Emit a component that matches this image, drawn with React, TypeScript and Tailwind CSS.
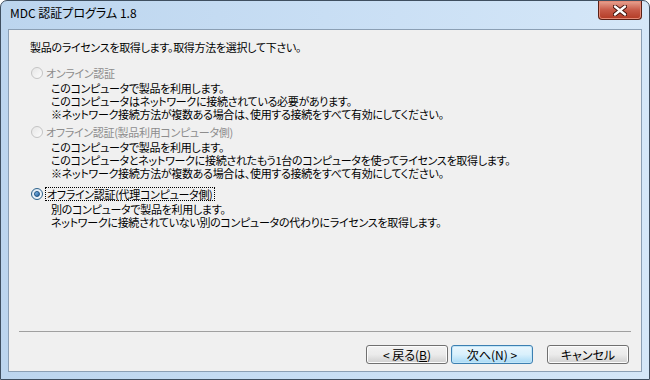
import { Fragment, ReactNode } from "react";

function Radio({ checked, disabled }: { checked?: boolean; disabled?: boolean }) {
  if (checked) {
    return (
      <span className="flex h-[12px] w-[12px] shrink-0 items-center justify-center rounded-full border border-[#2c628b] bg-gradient-to-br from-[#dce8f4] to-[#f6f9fc]">
        <span className="h-[6px] w-[6px] rounded-full border border-[#1c5180] bg-gradient-to-br from-[#8ec3ef] to-[#1f5f9e]" />
      </span>
    );
  }
  return (
    <span
      className={
        disabled
          ? "h-[12px] w-[12px] shrink-0 rounded-full border border-[#c4c4c4] bg-gradient-to-br from-[#e6e6e6] to-[#fbfbfb]"
          : "h-[12px] w-[12px] shrink-0 rounded-full border border-[#8e8f8f] bg-gradient-to-br from-[#dcdcdc] to-[#fafafa]"
      }
    />
  );
}

function Option({
  label,
  lines,
  checked,
  disabled,
  className,
}: {
  label: string;
  lines: string[];
  checked?: boolean;
  disabled?: boolean;
  className?: string;
}) {
  return (
    <div className={className}>
      <div className="flex h-[14px] items-center pl-[22px]">
        <Radio checked={checked} disabled={disabled} />
        <span
          className={
            checked
              ? "ml-[2px] border border-dotted border-black px-[1px] leading-[12px] text-black"
              : "ml-[3px] leading-[14px] " + (disabled ? "text-[#8d8d8d]" : "text-black")
          }
        >
          {label}
        </span>
      </div>
      {/* multi-line static text */}
      <p className="mt-[2px] pl-[42px] leading-[13px] text-black">
        {lines.map((l, i) => (
          <Fragment key={l}>
            {i > 0 && <br />}
            {l}
          </Fragment>
        ))}
      </p>
    </div>
  );
}

function Button({ children, focused }: { children: ReactNode; focused?: boolean }) {
  return (
    <button
      className={
        "flex h-[19px] w-[82px] items-center justify-center rounded-[3px] border text-[12px] leading-none text-black " +
        (focused
          ? "border-[#3c7fb1] bg-gradient-to-b from-[#eaf6fd] via-[#d9f0fc] to-[#a7d9f5] shadow-[inset_0_0_0_1px_#c2e6f8]"
          : "border-[#707070] bg-gradient-to-b from-[#f2f2f2] via-[#ebebeb] to-[#cfcfcf] shadow-[inset_0_0_0_1px_#fcfcfc]")
      }
    >
      {children}
    </button>
  );
}

export default function App() {
  return (
    <div className="h-[380px] w-[650px] bg-white font-['Noto_Sans_CJK_JP',sans-serif] text-[12px] [font-feature-settings:'palt']">
      <div className="flex h-full flex-col rounded-t-[7px] border border-[#3f4f60] bg-gradient-to-r from-[#bcd5ee] via-[#c8def4] to-[#d5e7f8]">
        {/* title bar */}
        <div className="flex h-[28px] items-start justify-between pl-[9px] pr-[7px]">
          <span className="mt-[4px] leading-[16px] text-black">MDC 認証プログラム 1.8</span>
          <div className="flex h-[19px] w-[44px] items-center justify-center rounded-b-[4px] border border-t-0 border-[#5a2016] bg-gradient-to-b from-[#e8a493] via-[#c75a48] to-[#b33a24] shadow-[inset_0_0_0_1px_#e58a76]">
            <svg width="14" height="11" viewBox="0 0 14 11">
              <path d="M2 1.5 L12 9.5 M12 1.5 L2 9.5" stroke="#3d0f08" strokeWidth="4.2" strokeLinecap="round" />
              <path d="M2 1.5 L12 9.5 M12 1.5 L2 9.5" stroke="#ffffff" strokeWidth="2.4" strokeLinecap="round" />
            </svg>
          </div>
        </div>
        {/* client area */}
        <div className="mx-[7px] mb-[7px] flex flex-1 flex-col border border-[#8b9fb4] bg-[#f0f0f0] text-[11px] tracking-[-0.3px]">
          <div className="mt-[10px] pl-[21px] leading-[14px] text-black">
            製品のライセンスを取得します。取得方法を選択して下さい。
          </div>
          <Option
            className="mt-[12px]"
            disabled
            label="オンライン認証"
            lines={[
              "このコンピュータで製品を利用します。",
              "このコンピュータはネットワークに接続されている必要があります。",
              "※ネットワーク接続方法が複数ある場合は、使用する接続をすべて有効にしてください。",
            ]}
          />
          <Option
            className="mt-[4px]"
            disabled
            label="オフライン認証(製品利用コンピュータ側)"
            lines={[
              "このコンピュータで製品を利用します。",
              "このコンピュータとネットワークに接続されたもう1台のコンピュータを使ってライセンスを取得します。",
              "※ネットワーク接続方法が複数ある場合は、使用する接続をすべて有効にしてください。",
            ]}
          />
          <Option
            className="mt-[7px]"
            checked
            label="オフライン認証(代理コンピュータ側)"
            lines={[
              "別のコンピュータで製品を利用します。",
              "ネットワークに接続されていない別のコンピュータの代わりにライセンスを取得します。",
            ]}
          />
          <div className="flex-1" />
          <div className="mx-[10px] h-px bg-[#a0a0a0]" />
          <div className="mt-[13px] mb-[7px] flex justify-end pr-[12px] tracking-normal">
            <div className="flex gap-[3px]">
              <Button>
                &lt; 戻る(<span className="underline">B</span>)
              </Button>
              <Button focused>次へ(N) &gt;</Button>
            </div>
            <div className="ml-[14px]">
              <Button>キャンセル</Button>
            </div>
          </div>
        </div>
      </div>
    </div>
  );
}
